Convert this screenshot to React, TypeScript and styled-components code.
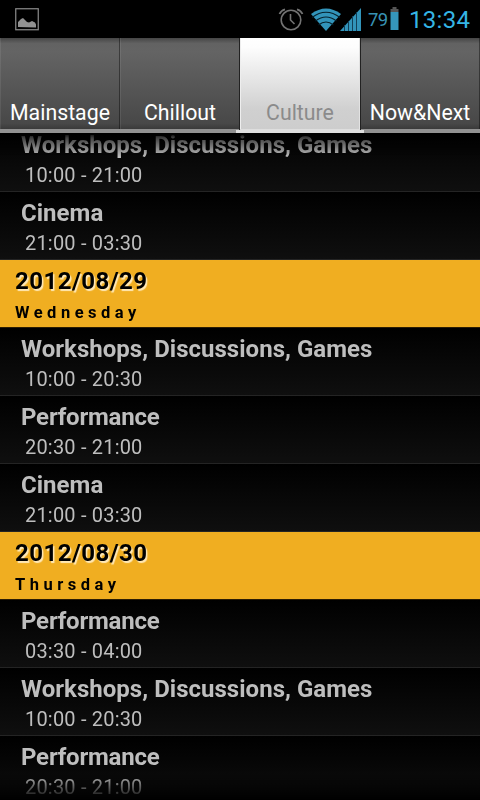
import React from "react";
import styled, { createGlobalStyle } from "styled-components";

const GlobalStyle = createGlobalStyle`
  * { box-sizing: border-box; }
  html, body { margin: 0; padding: 0; background: #000; }
  body { font-family: Roboto, "Liberation Sans", sans-serif; overflow: hidden; }
`;

const Screen = styled.div`
  width: 480px;
  height: 800px;
  display: flex;
  flex-direction: column;
  overflow: hidden;
  background: #000;
`;

const StatusBar = styled.header`
  flex: none;
  height: 38px;
  display: flex;
  align-items: center;
  padding: 0 10px 0 15px;
  color: #33a9d6;
`;

const StatusIcons = styled.div`
  margin-left: auto;
  display: flex;
  align-items: center;
`;

const Battery = styled.span`
  margin-left: 7px;
  width: 22px;
  font-size: 18.5px;
  letter-spacing: -0.6px;
  line-height: 38px;
  padding-top: 2px;
  color: #3792b4;
`;

const Clock = styled.span`
  margin-left: 10px;
  width: 61px;
  font-size: 24px;
  letter-spacing: 0.3px;
  line-height: 38px;
  padding-top: 2px;
  white-space: nowrap;
  color: #35b5e5;
`;

const Tabs = styled.nav`
  flex: none;
  height: 95px;
  display: grid;
  grid-template-columns: repeat(4, 120px);
`;

const Tab = styled.button<{ $active?: boolean }>`
  appearance: none;
  border: 0;
  margin: 0;
  padding: 0;
  display: flex;
  align-items: flex-end;
  justify-content: center;
  font-family: inherit;
  font-size: 21.3px;
  line-height: 32px;
  color: ${(p) => (p.$active ? "#8b8b8b" : "#fff")};
  background: ${(p) =>
    p.$active
      ? "linear-gradient(#fff 0%, #fdfdfd 10%, #d0d0d0 78%, #cdcdcd 100%)"
      : "linear-gradient(#454545 0%, #626262 6%, #646464 15%, #4b4b4b 85%, #484848 94%, #3a3a3a 100%)"};
  position: relative;
  z-index: ${(p) => (p.$active ? 1 : 0)};
  box-shadow: ${(p) =>
    p.$active
      ? "inset 1px 0 #eee, inset -1px 0 #e2e2e2, 1px 0 #222, -1px 0 #222"
      : "inset 1px 0 rgba(255,255,255,.08), inset -1px 0 rgba(0,0,0,.4)"};
  border-bottom: 4px solid ${(p) => (p.$active ? "#dedede" : "#929292")};

  /* The selected tab's underline reaches slightly past both of its sides. */
  &::after {
    content: "";
    display: ${(p) => (p.$active ? "block" : "none")};
    position: absolute;
    left: -4px;
    right: -4px;
    bottom: -4px;
    height: 3px;
    background: #dedede;
  }
`;

const List = styled.main`
  flex: 1;
  min-height: 0;
  overflow: hidden;
  display: flex;
  flex-direction: column;
  justify-content: flex-start;
  mask-image: linear-gradient(
    transparent 0,
    rgba(0, 0, 0, 0.35) 5px,
    #000 24px,
    #000 calc(100% - 26px),
    transparent 100%
  );
`;

const Entry = styled.article`
  flex: none;
  height: 68px;
  padding-left: 21px;
  border-bottom: 1px solid #242424;
  background: linear-gradient(#000, #0f0f0f);
  color: #bebebe;

  &:first-child {
    margin-top: -9px;
  }
`;

const Title = styled.h2<{ $tracking: number }>`
  margin: 0;
  padding-top: 5px;
  font-size: 24px;
  font-weight: 700;
  line-height: 32px;
  letter-spacing: ${(p) => p.$tracking}px;
  white-space: nowrap;
`;

const Time = styled.p`
  margin: 0;
  padding-left: 4px;
  font-size: 20px;
  letter-spacing: 0.19px;
  line-height: 28px;
`;

const DayHeader = styled.section`
  flex: none;
  height: 68px;
  padding-left: 15px;
  background: #f0ae21;
  border-bottom: 1px solid #2b1d03;
  color: #000;
`;

const DateText = styled.h1`
  margin: 0;
  padding-top: 5px;
  font-size: 24px;
  font-weight: 700;
  line-height: 32px;
  letter-spacing: 0.45px;
  text-shadow: 1.5px 1.5px 1px #ffe9b8;
`;

const Weekday = styled.p`
  margin: 0;
  padding-top: 1px;
  font-size: 16.5px;
  font-weight: 700;
  line-height: 30px;
  letter-spacing: 4.5px;
`;

const PictureIcon = () => (
  <svg width="24" height="23" viewBox="0 0 24 23">
    <rect x="0.75" y="0.75" width="22.5" height="21" fill="none" stroke="#8c8c8c" strokeWidth="1.2" />
    <path d="M3 19v-5l3-3 2-1 2 2 2 2 2 .5 3-1.500 3 1.500 1 2v3z" fill="#919191" />
  </svg>
);

const Alarm = styled.svg`
  margin-right: 6px;
`;

const AlarmIcon = () => (
  <Alarm width="26" height="26" viewBox="0 0 26 26" fill="none" stroke="#737373">
    <circle cx="13" cy="14" r="9.800" strokeWidth="1.600" />
    <path d="M12.500 8v6l4 4" strokeWidth="1.600" />
    <path d="M1.500 8Q3 4.500 7 3.300M24.500 8Q23 4.500 19 3.300" strokeWidth="1.800" />
  </Alarm>
);

const WifiIcon = () => (
  <svg width="32" height="25" viewBox="0 0 32 25">
    <path d="M1 7Q16-4 31 7L16 24z" fill="#3294ba" />
    <path
      d="M2 10.500Q16 0 30 10.500M5.500 14Q16 6 26.500 14M8.500 18Q16 12 23.500 18"
      fill="none"
      stroke="#06202b"
      strokeWidth="1.100"
    />
  </svg>
);

const Signal = styled.svg`
  margin-left: -2px;
`;

const SignalIcon = () => (
  <Signal width="21" height="25" viewBox="0 0 21 25">
    <path d="M0 24L21 1v23z" fill="#3294ba" />
    <path d="M4.500 18v6M8.500 14v10M12.500 9v15M16.500 5v19" stroke="#124058" strokeWidth="1" />
  </Signal>
);

const BatteryIcon = () => (
  <svg width="9" height="24" viewBox="0 0 9 24">
    <path d="M2.500 0h4v2H8.500v3H.5V2h2z" fill="#555" />
    <path d="M.5 5h8v18h-8z" fill="#3596bb" />
  </svg>
);

const tabs = ["Mainstage", "Chillout", "Culture", "Now&Next"];

type Item = { title: string; time: string } | { date: string; weekday: string };

const items: Item[] = [
  { title: "Workshops, Discussions, Games", time: "10:00 - 21:00" },
  { title: "Cinema", time: "21:00 - 03:30" },
  { date: "2012/08/29", weekday: "Wednesday" },
  { title: "Workshops, Discussions, Games", time: "10:00 - 20:30" },
  { title: "Performance", time: "20:30 - 21:00" },
  { title: "Cinema", time: "21:00 - 03:30" },
  { date: "2012/08/30", weekday: "Thursday" },
  { title: "Performance", time: "03:30 - 04:00" },
  { title: "Workshops, Discussions, Games", time: "10:00 - 20:30" },
  { title: "Performance", time: "20:30 - 21:00" },
];

const trackingOf = (title: string) => (title === "Performance" ? -0.2 : 0.03);

export default function App() {
  return (
    <Screen>
      <GlobalStyle />
      <StatusBar>
        <PictureIcon />
        <StatusIcons>
          <AlarmIcon />
          <WifiIcon />
          <SignalIcon />
          <Battery>79</Battery>
          <BatteryIcon />
          <Clock>13:34</Clock>
        </StatusIcons>
      </StatusBar>
      <Tabs>
        {tabs.map((name) => (
          <Tab key={name} $active={name === "Culture"}>
            {name}
          </Tab>
        ))}
      </Tabs>
      <List>
        {items.map((item, i) =>
          "date" in item ? (
            <DayHeader key={i}>
              <DateText>{item.date}</DateText>
              <Weekday>{item.weekday}</Weekday>
            </DayHeader>
          ) : (
            <Entry key={i}>
              <Title $tracking={trackingOf(item.title)}>{item.title}</Title>
              <Time>{item.time}</Time>
            </Entry>
          )
        )}
      </List>
    </Screen>
  );
}
